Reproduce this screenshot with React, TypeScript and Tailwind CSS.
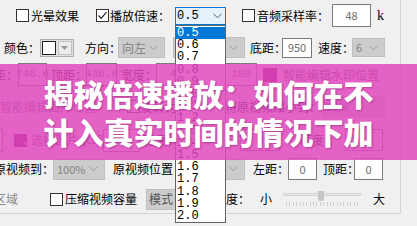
import type { ReactNode } from 'react'

const cjk = "font-['Noto_Sans_CJK_SC',sans-serif]"
const mono = "font-['Liberation_Mono',monospace]"

const speeds = ['0.5', '0.6', '0.7', '0.8', '0.9', '1.0', '1.1', '1.2', '1.3', '1.4', '1.5', '1.6', '1.7', '1.8', '1.9', '2.0']

const Chevron = ({ color = '#5a5a5a' }: { color?: string }) => (
  <svg width="9" height="6" viewBox="0 0 9 6" fill="none">
    <polyline points="0.5,0.8 4.5,4.8 8.5,0.8" stroke={color} strokeWidth="1" />
  </svg>
)

const Check = ({ checked, className = '' }: { checked?: boolean; className?: string }) => (
  <div className={`flex h-[13px] w-[13px] items-center justify-center border border-[#333] bg-white ${className}`}>
    {checked && (
      <svg width="11" height="11" viewBox="0 0 11 11" fill="none">
        <polyline points="1.5,5.5 4.2,8.3 9.5,2.2" stroke="#222" strokeWidth="1.2" />
      </svg>
    )}
  </div>
)

const Field = ({ children, className = '' }: { children?: ReactNode; className?: string }) => (
  <div className={`flex items-center justify-center border border-[#7a7a7a] bg-white text-[11px] text-[#6d6d6d] ${className}`}>
    {children}
  </div>
)

const Dis = ({ children, className = '' }: { children?: ReactNode; className?: string }) => (
  <div className={`flex items-center justify-between border border-[#bfbfbf] bg-[#cccccc] pl-[3px] pr-[6px] text-[11px] text-[#838383] ${className}`}>
    <span>{children}</span>
    <Chevron color="#9a9a9a" />
  </div>
)

export default function App() {
  return (
    <div className={`relative h-[226px] w-[417px] overflow-hidden bg-[#f0f0f0] text-[12px] leading-none text-black ${cjk}`}>
      <div className="flex h-[214px] w-[401px] flex-col border-r border-b border-[#d5d5d5] [&>div>*]:shrink-0 [&>div>*]:whitespace-nowrap">
        {/* row 1 */}
        <div className="flex h-[32px] items-center">
          <Check className="ml-[16px]" />
          <span className="ml-[2px]">光晕效果</span>
          <Check checked className="ml-[17px]" />
          <span className="ml-[1px]">播放倍速：</span>
          <div className={`ml-[5px] flex h-[18px] w-[51px] items-center justify-between border border-[#0078d7] bg-[#e5f1fb] pl-[1px] pr-[3px] text-[12px] ${mono}`}>
            <span>0.5</span>
            <Chevron />
          </div>
          <Check className="ml-[16px]" />
          <span className="ml-[2px]">音频采样率：</span>
          <Field className="ml-[3px] h-[23px] w-[39px]">48</Field>
          <span className="ml-[6px] font-['Liberation_Serif',serif] text-[14px]">k</span>
        </div>

        {/* row 2 */}
        <div className="flex h-[32px] items-center">
          <span className="ml-[4px]">颜色：</span>
          <div className="flex h-[18px] w-[34px] items-center gap-[2px] border border-[#adadad] bg-[#e1e1e1] px-[1px]">
            <div className="h-[14px] w-[14px] border border-[#222] bg-white" />
            <div className="flex h-[14px] w-[15px] items-center justify-center border border-[#c4c4c4] bg-[#ececec]">
              <svg width="7" height="4" viewBox="0 0 7 4"><polygon points="0,0 7,0 3.5,4" fill="#9a9a9a" /></svg>
            </div>
          </div>
          <span className="ml-[11px]">方向：</span>
          <Dis className="ml-[-3px] h-[21px] w-[47px] text-[12px]">向左</Dis>
          <Dis className="ml-[8px] h-[21px] w-[72px]"> </Dis>
          <span className="ml-[5px]">底距：</span>
          <Field className="ml-[-4px] h-[20px] w-[30px]">950</Field>
          <span className="ml-[6px]">速度：</span>
          <Dis className="ml-[-2px] h-[19px] w-[33px]">6</Dis>
        </div>

        {/* row 3 */}
        <div className="flex h-[22px] items-center">
          <span className="ml-[-6px]">距：</span>
          <Field className={`h-[23px] w-[29px] ${mono} text-[10px]`}>746.6</Field>
          <span className="ml-[4px]">顶距：</span>
          <Field className={`ml-[-1px] h-[23px] w-[31px] ${mono} text-[10px]`}>436.6</Field>
          <span className="ml-[4px]">宽度：</span>
          <Field className={`ml-[-1px] h-[23px] w-[40px] ${mono} text-[10px]`}>42</Field>
          <Field className={`ml-[29px] h-[23px] w-[32px] ${mono} text-[10px]`}>180</Field>
          <div className="ml-[6px] h-[14px] w-[14px] bg-[#7a0058]" />
          <span className="ml-[6px] text-[#555]">智能编辑水印位置</span>
        </div>

        {/* row 4 */}
        <div className="flex h-[42px] items-center">
          <span className="text-[#6d6d6d]">智能编辑图片位置</span>
          <Check className="ml-[31px]" />
          <span className="ml-[1px]">旋转为</span>
          <span className="ml-[48px]">将原视频缩小到：</span>
          <Dis className="ml-[1px] h-[21px] w-[63px]">85%</Dis>
        </div>

        {/* row 5 */}
        <div className="flex h-[26px] items-center">
          <Field className="ml-[-20px] h-[23px] w-[23px]" />
          <div className="ml-[11px] flex h-[13px] w-[13px] items-end justify-end bg-[#7a0058]">
            <span className="text-[7px] leading-none text-white">+</span>
          </div>
          <span className="ml-[4px] text-[#555]">选择图片水印</span>
          <Field className="h-[23px] w-[37px]" />
          <span className="ml-[3px]">宽度：</span>
          <Field className={`ml-[61px] h-[22px] w-[40px] ${mono} text-[10px]`}>0</Field>
          <span className="ml-[20px]">高度：</span>
          <Field className="ml-[9px] h-[22px] w-[38px]" />
        </div>

        {/* row 6 */}
        <div className="flex h-[32px] items-center">
          <span className="ml-[-6px]">原视频到：</span>
          <Dis className="ml-[-1px] h-[21px] w-[52px]">100%</Dis>
          <span className="ml-[8px]">原视频位置</span>
          <Dis className="ml-[2px] h-[21px] w-[70px]"> </Dis>
          <span className="ml-[8px]">左距：</span>
          <Field className="ml-[-1px] h-[22px] w-[29px]">0</Field>
          <span className="ml-[6px]">顶距：</span>
          <Field className="ml-[-5px] h-[22px] w-[29px]">0</Field>
        </div>

        {/* row 7 */}
        <div className="flex h-[28px] items-center">
          <span className="ml-[-6px] text-[#8a8a8a]">区域</span>
          <Check className="ml-[32px]" />
          <span className="ml-[2px]">压缩视频容量</span>
          <div className="ml-[9px] flex h-[21px] w-[80px] items-center border border-[#bfbfbf] bg-[#cccccc] pl-[2px] text-[#555]">模式</div>
          <span className="ml-[-12px]">强度：</span>
          <span className="ml-[10px]">小</span>
          <div className="relative ml-[11px] flex h-[22px] w-[78px] flex-col justify-center gap-[6px]">
            <div className="h-[3px] w-full border border-[#d6d6d6] bg-[#e7e7e7]" />
            <div className="flex justify-between px-[3px]">
              {Array.from({ length: 22 }).map((_, i) => (
                <div key={i} className="h-[4px] w-px bg-[#cfcfcf]" />
              ))}
            </div>
            <div className="absolute left-[35px] top-[3px] h-[10px] w-[6px] rounded-b-[2px] bg-[#c6c6c6]" />
          </div>
          <span className="ml-[12px]">大</span>
        </div>
      </div>

      {/* open dropdown list */}
      <div className={`absolute left-[175px] top-[25px] w-[51px] border border-[#646464] bg-white pt-[1px] text-[12px] ${mono}`}>
        {speeds.map((s, i) => (
          <div
            key={s}
            className={`flex h-[12.2px] items-center pl-[1px] ${i === 0 ? 'bg-[#0078d7] text-white' : 'text-black'}`}
          >
            {s}
          </div>
        ))}
      </div>

      {/* pink banner */}
      <div className="absolute left-0 right-0 top-[64px] h-[96px] bg-[#e248be]/85" />
      <div className="absolute left-0 right-0 top-[74px] text-center text-[30px] font-black leading-[38px] text-white [text-shadow:1px_1px_2px_rgba(80,0,60,0.35)]">
        <div>揭秘倍速播放：如何在不</div>
        <div>计入真实时间的情况下加</div>
      </div>
    </div>
  )
}
